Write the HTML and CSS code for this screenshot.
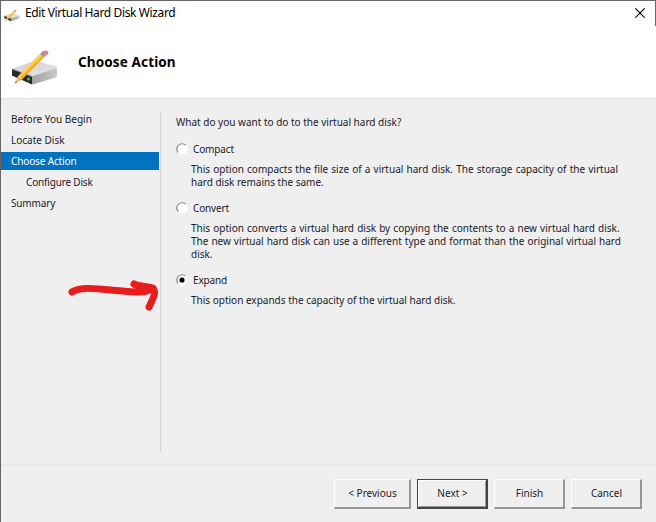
FILE: index.html
```html
<!DOCTYPE html>
<html lang="en">
<head>
<meta charset="utf-8">
<title>Edit Virtual Hard Disk Wizard</title>
<link rel="stylesheet" href="styles.css">
</head>
<body>
<svg width="0" height="0" class="defs" aria-hidden="true">
  <defs>
    <linearGradient id="top" x1="0" y1="0" x2="1" y2="1"><stop offset="0" stop-color="#d0d0d3"/><stop offset="1" stop-color="#e6e6e8"/></linearGradient>
    <linearGradient id="side" x1="0" y1="0" x2="1" y2="0"><stop offset="0" stop-color="#a0a0a3"/><stop offset="1" stop-color="#cacacd"/></linearGradient>
    <symbol id="disk" viewBox="0 0 48 37">
      <path d="M1 20 22 12.500Q23 12 25 12.400L45 17.500Q46 18 46 19V26.500Q46 28 44 28.500L22 35.500 1 27Z" fill="#d4d4d6"/>
      <path d="M1 20 22 12.500Q23 12 25 12.400L45 17.500Q46.500 18.500 45 19.500L21 27.500Z" fill="url(#top)"/>
      <path d="M21 27.500 46 19V26.500Q46 28 44 28.500L21 35.500Z" fill="url(#side)"/>
      <path d="M1 20 21 27.500V35.500L1 26.500Z" fill="#29292b"/>
      <path d="M1 20 21 27.500" stroke="#8b8b8d" stroke-width=".8"/>
      <circle cx="17.500" cy="30" r="1.500" fill="#24d43a"/>
      <path d="M4 34.500 6.500 28 10.500 31Z" fill="#e3b98a"/>
      <path d="M6.500 28 29 5 33 8.500 10.500 31Z" fill="#f0b030"/>
      <path d="M6.500 28 29 5 31 6.800 8.500 29.500Z" fill="#ffd055"/>
      <path d="M29 5 31.700 2.300 35.700 5.800 33 8.500Z" fill="#9b9a9b"/>
      <path d="M31.700 2.800Q34 .5 36.500 2T35.700 6.200Z" fill="#f17b7d"/>
      <path d="M4 34.500 4.800 32.300 6 33.300Z" fill="#635446"/>
    </symbol>
    <symbol id="radio" viewBox="0 0 12 12">
      <circle cx="6" cy="6" r="5" fill="#fff"/>
      <path d="M2.300 9.700A5.200 5.200 0 0 1 9.700 2.300" fill="none" stroke="#858585" stroke-width="1.200"/>
      <path d="M9.700 2.300A5.200 5.200 0 0 1 2.300 9.700" fill="none" stroke="#fff"/>
    </symbol>
  </defs>
</svg>
<div class="window">
  <div class="titlebar">
    <svg class="app-icon"><use href="#disk"/></svg>
    <span class="caption">Edit Virtual Hard Disk Wizard</span>
    <svg class="close" viewBox="0 0 10 10"><path d="M.3.300 9.700 9.700M9.700.300.3 9.700" stroke="#000" stroke-width="1.100"/></svg>
  </div>
  <header class="header">
    <svg class="disk-icon"><use href="#disk"/></svg>
    <h1>Choose Action</h1>
  </header>
  <main class="body">
    <nav class="steps">
      <div class="step">Before You Begin</div>
      <div class="step">Locate Disk</div>
      <div class="step active">Choose Action</div>
      <div class="step sub">Configure Disk</div>
      <div class="step tight">Summary</div>
    </nav>
    <section class="content">
      <p class="question">What do you want to do to the virtual hard disk?</p>
      <div class="option">
        <label><svg class="radio"><use href="#radio"/></svg>Compact</label>
        <p><span class="wide">This option compacts the file size of a virtual hard disk. The storage capacity of the virtual</span><br>hard disk remains the same.</p>
      </div>
      <div class="option">
        <label><svg class="radio"><use href="#radio"/></svg>Convert</label>
        <p><span class="wide">This option converts a virtual hard disk by copying the contents to a new virtual hard disk.</span><br><span class="medium">The new virtual hard disk can use a different type and format than the original virtual hard</span><br>disk.</p>
      </div>
      <div class="option">
        <label><svg class="radio" viewBox="0 0 12 12"><use href="#radio"/><circle cx="6" cy="6" r="2.600"/></svg>Expand</label>
        <p>This option expands the capacity of the virtual hard disk.</p>
      </div>
    </section>
  </main>
  <footer class="footer">
    <button class="prev">&lt; Previous</button>
    <button class="next">Next &gt;</button>
    <button>Finish</button>
    <button>Cancel</button>
  </footer>
  <svg class="arrow" viewBox="0 0 94 36"><path d="M6 15C15 9 30 12 45 13 62 14 80 18 86 11M68 7C74 10 80 9 87 11 91 17 86 23 83 30" fill="none" stroke="#e81c1c" stroke-width="7" stroke-linecap="round" stroke-linejoin="round"/></svg>
</div>
</body>
</html>
```
FILE: styles.css
```css
* { box-sizing: border-box; }
body { margin: 0; font: 10px/13px "Noto Sans", sans-serif; color: #20202a; }
h1, p { margin: 0; }
.defs { position: absolute; }
.window {
  position: relative;
  width: 656px;
  height: 522px;
  background: #efefef;
  border-top: 1px solid #666;
  border-left: 1px solid #666;
  display: flex;
  flex-direction: column;
  overflow: hidden;
  white-space: nowrap;
}
.titlebar {
  height: 25px;
  flex: none;
  display: flex;
  align-items: center;
  background: #fff;
  border-right: 1px solid #666;
  padding: 0 10px 0 3px;
}
.app-icon { width: 16px; height: 13px; margin-top: 3px; }
.caption { font-size: 12px; color: #000; margin: -2px 0 0 5px; letter-spacing: -.38px; }
.close { width: 10px; height: 10px; margin: -1px 0 0 auto; }
.header {
  height: 73px;
  flex: none;
  display: flex;
  background: #fff;
  border-bottom: 1px solid #e3e3e3;
  padding: 23px 0 0 10px;
}
.disk-icon { width: 48px; height: 37px; }
h1 { font-size: 13.5px; line-height: 18px; letter-spacing: .13px; margin: 4px 0 0 19px; color: #000; }
.body { height: 365px; flex: none; display: flex; }
.steps { width: 159px; padding-top: 11px; display: flex; flex-direction: column; gap: 3px; }
.step { height: 18px; line-height: 18px; padding-left: 10px; }
.step.active { background: #0072c0; color: #fff; width: 158px; letter-spacing: -.14px; }
.step.sub { padding-left: 25px; letter-spacing: -.18px; }
.step.tight { letter-spacing: -.15px; }
.content { height: 341px; margin-top: 12px; border-left: 1px solid #d5d5d5; padding: 5px 0 0 15px; }
.question { height: 27px; }
.option label { display: flex; align-items: center; height: 13px; gap: 5px; letter-spacing: -.15px; }
.radio { width: 12px; height: 12px; margin-bottom: 1px; }
.option p { margin: 7px 0 13px 15px; }
.wide { word-spacing: .55px; }
.medium { word-spacing: .4px; }
.footer {
  flex: 1;
  border-top: 2px solid #e9e9e9;
  display: flex;
  align-items: flex-start;
  padding: 13px 0 0 333px;
  gap: 6px;
}
button {
  width: 71px;
  height: 30px;
  padding: 0 0 0 1px;
  background: #efefef;
  border: 1px solid #fff;
  border-right: 2px solid #959595;
  border-bottom: 2px solid #959595;
  font: 10px/13px "Noto Sans", sans-serif;
  color: #20202a;
}
.prev { width: 77px; }
.next { border: 1px solid #444; border-right-width: 2px; border-bottom-width: 2px; box-shadow: inset 1px 1px #fff, inset -1px -1px #999; }
.arrow { position: absolute; left: 65px; top: 276px; width: 94px; height: 36px; }
```
